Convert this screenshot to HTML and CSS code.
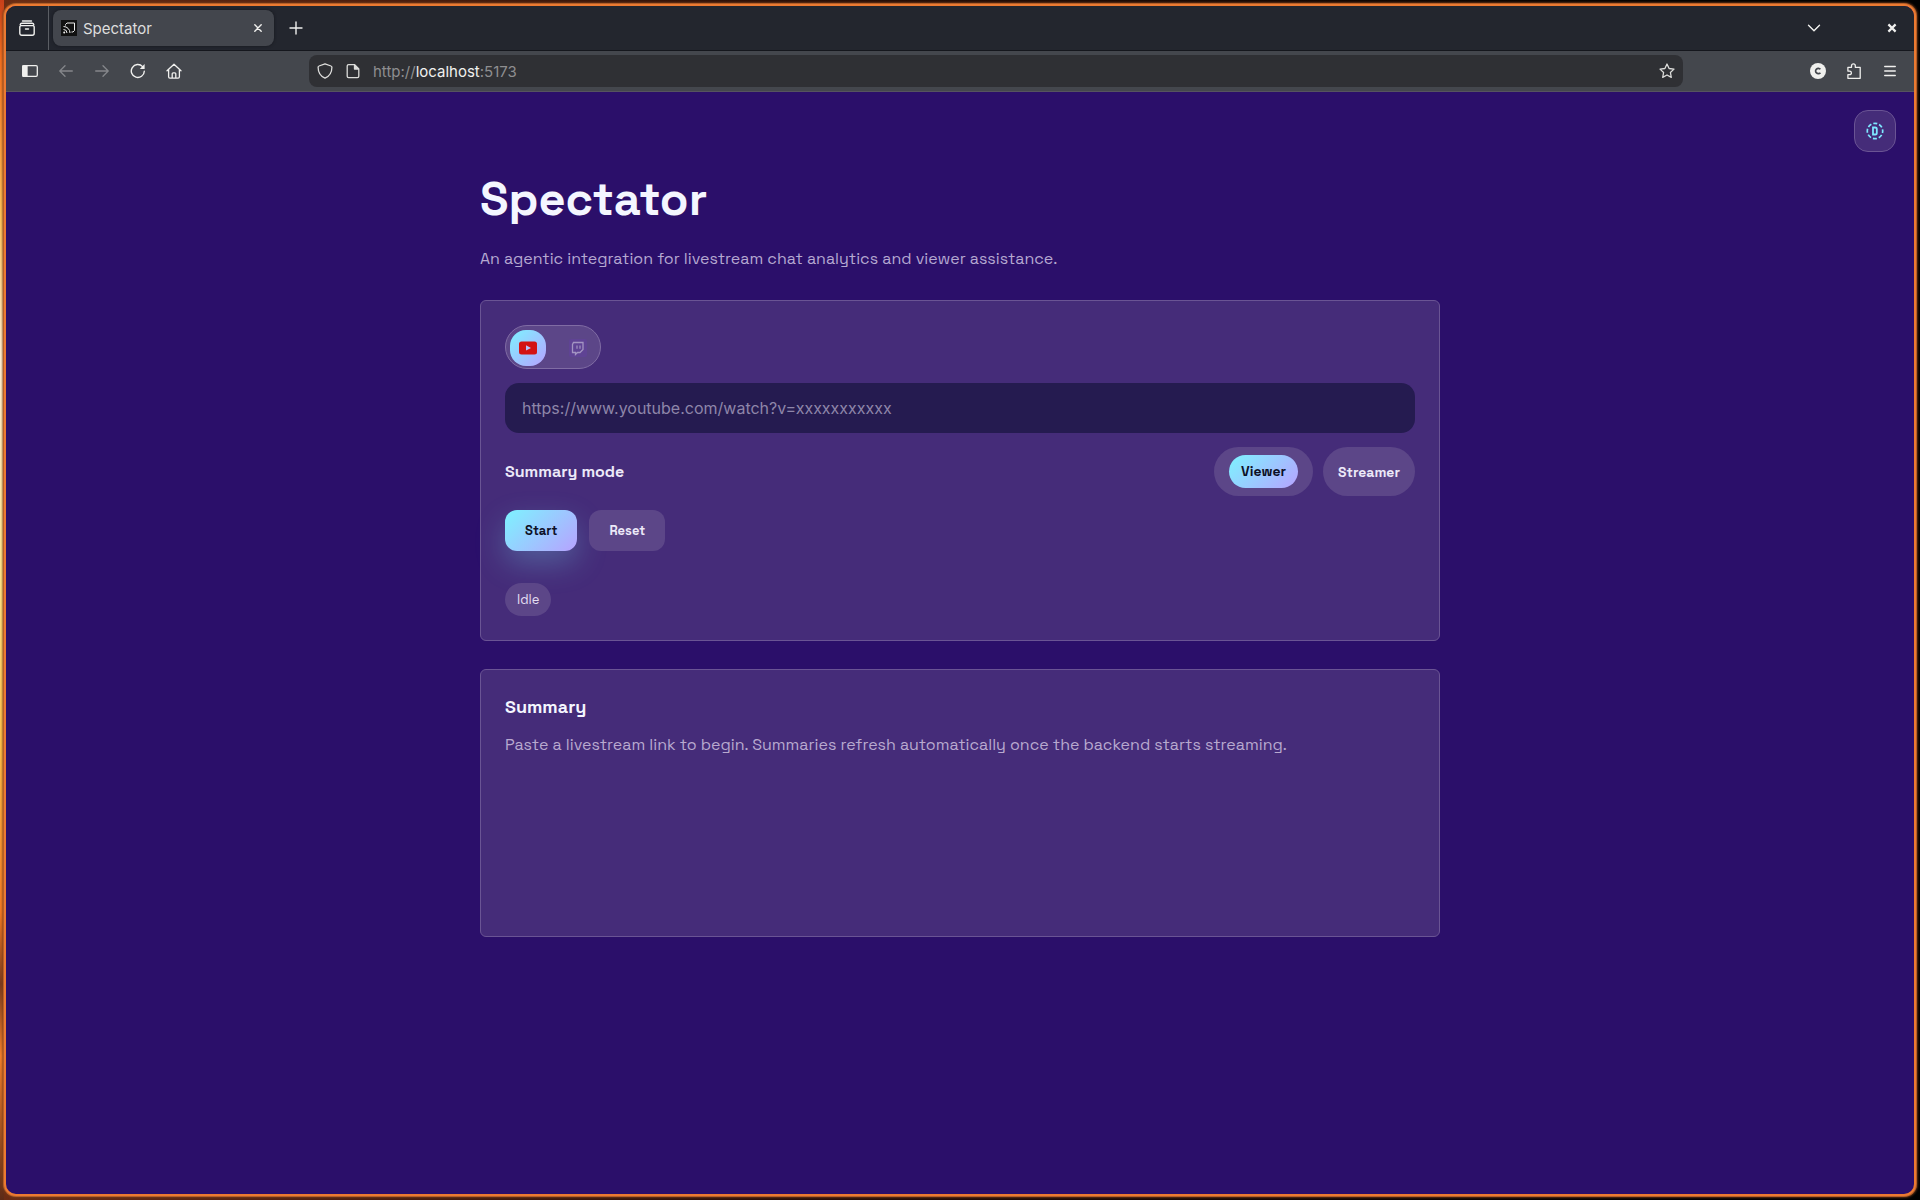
FILE: index.html
```html
<!DOCTYPE html>
<html lang="en">
<head>
  <meta charset="UTF-8">
  <meta name="viewport" content="width=device-width, initial-scale=1.0">
  <title>Spectator</title>
  <link rel="stylesheet" href="styles.css">
</head>
<body>
  <div class="window">
    <div class="tab-strip">
      <button class="icon-button recent" aria-label="Recent browsing">
        <svg width="16" height="16" viewBox="0 0 16 16" fill="none" stroke="currentColor" stroke-width="1.4" stroke-linecap="round" stroke-linejoin="round"><path d="M3.500 1h9M1.200 4.600c.2-.9.800-1.300 1.600-1.300h10.400c.8 0 1.400.4 1.600 1.300M2.200 5.600h11.600a1.400 1.400 0 0 1 1.400 1.400v6.300a1.900 1.900 0 0 1-1.900 1.900H2.700a1.900 1.900 0 0 1-1.900-1.900V7a1.400 1.400 0 0 1 1.400-1.400zM6.500 9h3"/></svg>
      </button>
      <div class="tab">
        <svg class="favicon" width="16" height="16" viewBox="0 0 16 16" fill="none"><rect width="16" height="16" fill="#111"/><path d="M4.500 5.500V4.500L6 3h7.500v7.500L12 12h-1.500" stroke="#eee"/><path d="M2.500 6.500a6.500 6.500 0 0 1 6.500 6.500M2.500 9.500A3.500 3.500 0 0 1 6 13" stroke="#eee"/><circle cx="3.200" cy="12.400" r="1" fill="#eee"/></svg>
        <span class="tab-title">Spectator</span>
        <button class="tab-close" aria-label="Close tab">
          <svg width="8" height="8" viewBox="0 0 8 8" stroke="currentColor" stroke-width="1.4" stroke-linecap="round"><path d="M.8.8l6.400 6.400M7.200.8L.8 7.200"/></svg>
        </button>
      </div>
      <button class="icon-button" aria-label="New tab">
        <svg width="14" height="14" viewBox="0 0 14 14" stroke="currentColor" stroke-width="1.400" stroke-linecap="round"><path d="M7 1v12M1 7h12"/></svg>
      </button>
      <div class="window-controls">
        <button class="icon-button" aria-label="List all tabs">
          <svg width="14" height="8" viewBox="0 0 14 8" fill="none" stroke="currentColor" stroke-width="1.400" stroke-linecap="round" stroke-linejoin="round"><path d="M1.500 1.200L7 6.700l5.500-5.500"/></svg>
        </button>
        <button class="icon-button window-close" aria-label="Close window">
          <svg width="10" height="10" viewBox="0 0 10 10" stroke="currentColor" stroke-width="2.200"><path d="M1.400 1.400l7.200 7.200M8.600 1.400L1.400 8.600"/></svg>
        </button>
      </div>
    </div>

    <div class="toolbar">
      <div class="toolbar-group">
        <button class="icon-button" aria-label="Sidebar">
          <svg width="16" height="12" viewBox="0 0 16 12" fill="none" stroke="currentColor" stroke-width="1.300"><rect x=".7" y=".7" width="14.600" height="10.600" rx="1.200"/><path d="M1 1h4v10H1z" fill="currentColor"/></svg>
        </button>
        <button class="icon-button" aria-label="Back" disabled>
          <svg width="14" height="12" viewBox="0 0 14 12" fill="none" stroke="currentColor" stroke-width="1.300" stroke-linecap="round" stroke-linejoin="round"><path d="M13.300 6H.9M6 .8L.8 6 6 11.200"/></svg>
        </button>
        <button class="icon-button" aria-label="Forward" disabled>
          <svg width="14" height="12" viewBox="0 0 14 12" fill="none" stroke="currentColor" stroke-width="1.300" stroke-linecap="round" stroke-linejoin="round"><path d="M.7 6h12.400M8 .8L13.200 6 8 11.200"/></svg>
        </button>
        <button class="icon-button" aria-label="Reload">
          <svg width="16" height="16" viewBox="0 0 16 16" fill="none" stroke="currentColor" stroke-width="1.400" stroke-linecap="round"><path d="M14.300 8.200A6.500 6.500 0 1 1 12.600 3.600"/><path d="M14.600 1v5H9.800z" fill="currentColor" stroke="none"/></svg>
        </button>
        <button class="icon-button" aria-label="Home">
          <svg width="16" height="16" viewBox="0 0 16 16" fill="none" stroke="currentColor" stroke-width="1.300" stroke-linecap="round" stroke-linejoin="round"><path d="M1 7.800l7-6.600 7 6.600M2.600 6.600v7.200c0 .8.500 1.300 1.300 1.300h8.200c.8 0 1.300-.5 1.300-1.300V6.600M6.200 15v-4.200c0-.6.400-1 1-1h1.600c.6 0 1 .4 1 1V15"/></svg>
        </button>
      </div>
      <div class="url-bar">
        <svg width="16" height="16" viewBox="0 0 16 16" fill="none" stroke="currentColor" stroke-width="1.300" stroke-linejoin="round"><path d="M8 .8L14 3c.6.200.9.600.9 1.200 0 5-2.200 8.800-6.900 11C3.300 13 1.100 9.200 1.100 4.200c0-.6.300-1 .9-1.200z"/></svg>
        <svg width="16" height="16" viewBox="0 0 16 16" fill="none" stroke="currentColor" stroke-width="1.300" stroke-linejoin="round"><path d="M3.600 1.700h6l4.200 4.200v7.300c0 .800-.6 1.400-1.400 1.400H3.600c-.8 0-1.400-.6-1.400-1.400V3.100c0-.8.600-1.400 1.400-1.400z"/><path d="M9.500 2v4h4z" fill="currentColor"/></svg>
        <span class="url">http://<b>localhost</b>:5173</span>
        <button class="icon-button star" aria-label="Bookmark this page">
          <svg width="16" height="16" viewBox="0 0 16 16" fill="none" stroke="currentColor" stroke-width="1.300" stroke-linejoin="round"><path d="M8 1l2.100 4.500 4.900.600-3.600 3.400.9 4.900L8 12l-4.300 2.400.9-4.900L1 6.100l4.900-.600z"/></svg>
        </button>
      </div>
      <div class="toolbar-group">
        <button class="icon-button" aria-label="Account">
          <svg width="16" height="16" viewBox="0 0 16 16"><circle cx="8" cy="8" r="8" fill="currentColor"/><path d="M10.400 6.300a2.700 2.700 0 1 0 0 3.400" fill="none" stroke="#44474d" stroke-width="1.700"/></svg>
        </button>
        <button class="icon-button" aria-label="Extensions">
          <svg width="16" height="16" viewBox="0 0 16 16" fill="none" stroke="currentColor" stroke-width="1.300" stroke-linejoin="round"><path d="M5.500 4.300V2.700a1.900 1.900 0 0 1 3.800 0v1.600h4.900v11H1.900v-3.600h1.700a1.800 1.800 0 0 0 0-3.600H1.900V4.300z"/></svg>
        </button>
        <button class="icon-button" aria-label="Menu">
          <svg width="12" height="12" viewBox="0 0 12 12" stroke="currentColor" stroke-width="1.300" stroke-linecap="round"><path d="M.7 1.500h10.600M.7 6h10.600M.7 10.500h10.600"/></svg>
        </button>
      </div>
    </div>

    <div class="page">
      <button class="dev-button" aria-label="Developer mode">
        <svg width="18" height="18" viewBox="0 0 18 18" fill="none" stroke="currentColor"><circle cx="9" cy="9" r="7.700" stroke-width="1.700" stroke-dasharray="4.050 2" stroke-dashoffset="2"/><path d="M7 5.500h2.200c1 0 1.600.6 1.600 1.600v3.800c0 1-.6 1.600-1.600 1.600H7z" stroke-width="1.800"/></svg>
      </button>
      <main class="container">
        <header>
          <h1>Spectator</h1>
          <p class="tagline">An agentic integration for livestream chat analytics and viewer assistance.</p>
        </header>

        <section class="card controls">
          <div class="platform-toggle">
            <button class="platform active" aria-label="YouTube">
              <svg width="18" height="14" viewBox="0 0 18 14"><rect y=".5" width="18" height="13" rx="2.500" fill="#d31313"/><path d="M7 4.200v5.300L12 7z" fill="#b4c4ff"/></svg>
            </button>
            <button class="platform" aria-label="Twitch">
              <svg width="18" height="18" viewBox="0 0 18 18"><rect width="18" height="18" rx="2" fill="#5f4394"/><path d="M4.500 3.500h9.500v7l-3 3H8.500l-2 2v-2h-3V5.500z" fill="none" stroke="#a394c2" stroke-width="1.300"/><path d="M8 6.500v3.200M11 6.500v3.200" stroke="#a394c2" stroke-width="1.200"/></svg>
            </button>
          </div>
          <input class="link-input" type="text" aria-label="Livestream link" placeholder="https://www.youtube.com/watch?v=xxxxxxxxxxx">
          <div class="mode-row">
            <span class="mode-label">Summary mode</span>
            <div class="mode-options">
              <button class="mode"><span class="mode-active">Viewer</span></button>
              <button class="mode">Streamer</button>
            </div>
          </div>
          <div class="actions">
            <button class="button start-button">Start</button>
            <button class="button reset-button">Reset</button>
          </div>
          <span class="status">Idle</span>
        </section>

        <section class="card summary">
          <h2>Summary</h2>
          <p>Paste a livestream link to begin. Summaries refresh automatically once the backend starts streaming.</p>
        </section>
      </main>
    </div>
  </div>
</body>
</html>
```

FILE: styles.css
```css
* {
  box-sizing: border-box;
}
body {
  margin: 0;
  padding: 4px;
  min-height: 100vh;
  display: flex;
  font-family: "Space Grotesk", Inter, sans-serif;
  background: linear-gradient(90deg, transparent 4px, #6b2c14 4px, #2a0f08 40%, #000 90%),
    linear-gradient(#c8401a, #f5701f 5%, #ffc65a 18%, #fff3d8 30%, #ffe88a 48%, #ffc24a 62%, #f57a22 76%, #7a3a1c 82%, #f5802a 88%, #5c2a17);
}
button {
  font-family: inherit;
  border: none;
  padding: 0;
  color: inherit;
  background: none;
  cursor: pointer;
}
h1, h2, p {
  margin: 0;
}
svg {
  display: block;
  flex: none;
}

/* browser window */
.window {
  flex: 1;
  display: flex;
  flex-direction: column;
  border: 2px solid #ec7a31;
  border-radius: 12px;
  overflow: hidden;
  box-shadow: 0 0 0 1px #b55f28, 0 0 2px 2px rgba(120, 60, 25, 0.7);
  background: #2b0f6a;
}
.tab-strip, .toolbar {
  display: flex;
  align-items: center;
  color: #f0f0ee;
  font-family: Inter, sans-serif;
}
.tab-strip {
  height: 45px;
  background: #23262e;
  border-bottom: 1px solid #15171d;
}
.icon-button {
  width: 36px;
  height: 32px;
  display: flex;
  align-items: center;
  justify-content: center;
}
.icon-button:disabled {
  color: #85878b;
}
.recent {
  width: 43px;
  height: 44px;
  border-right: 1px solid #5b5e64;
}
.tab {
  width: 221px;
  height: 36px;
  margin: 0 4px;
  padding: 0 8px;
  display: flex;
  align-items: center;
  gap: 6px;
  border-radius: 8px;
  background: #43464d;
  box-shadow: 0 0 3px #15171d;
}
.tab-title {
  flex: 1;
  font-size: 15px;
  color: #dededd;
}
.tab-close {
  padding: 4px;
}
.window-controls {
  margin-left: auto;
  padding-right: 4px;
  display: flex;
  gap: 42px;
}
.toolbar {
  height: 41px;
  padding: 0 6px;
  gap: 117px;
  background: #44474d;
  border-bottom: 1px solid #56545f;
}
.toolbar-group {
  display: flex;
}
.url-bar {
  flex: 1;
  height: 32px;
  padding: 0 0 0 8px;
  display: flex;
  align-items: center;
  gap: 12px;
  border-radius: 8px;
  background: #2f3034;
  color: #dcdcda;
}
.url {
  flex: 1;
  font-size: 15px;
  color: #8e8e90;
}
.url b {
  font-weight: 400;
  color: #f0f0ee;
}
.star {
  width: 32px;
}

/* page */
.page {
  flex: 1;
  position: relative;
  color: #f4f6ff;
}
.dev-button {
  position: absolute;
  top: 18px;
  right: 18px;
  width: 42px;
  height: 42px;
  display: flex;
  align-items: center;
  justify-content: center;
  border: 1px solid #6a5494;
  border-radius: 14px;
  background: #452c79;
  color: #7de8ff;
}
.container {
  max-width: 960px;
  margin: 0 auto;
  padding-top: 72px;
  display: flex;
  flex-direction: column;
  gap: 28px;
}
h1 {
  font-size: 47px;
  line-height: 70px;
  font-weight: 700;
}
.tagline {
  margin-top: 12px;
  font-size: 16px;
  line-height: 26px;
  color: #b5a8d1;
}
.card {
  padding: 24px;
  border: 1px solid #6a5494;
  border-radius: 6px;
  background: #452c79;
}
.controls {
  display: flex;
  flex-direction: column;
  align-items: flex-start;
  gap: 14px;
}
.platform-toggle {
  display: flex;
  gap: 14px;
  padding: 4px 4px 2px;
  border: 1px solid #806ca4;
  border-radius: 22px;
  background: #5c4688;
}
.platform {
  width: 36px;
  height: 36px;
  display: flex;
  align-items: center;
  justify-content: center;
}
.platform.active {
  border-radius: 16px;
  background: linear-gradient(135deg, #7df3ff, #b7a2ff);
}
.link-input {
  width: 100%;
  height: 50px;
  padding: 0 17px;
  border: none;
  border-radius: 14px;
  background: #251b50;
  color: #f4f6ff;
  font-family: Inter, sans-serif;
  font-size: 16px;
}
.link-input::placeholder {
  color: #8e86a9;
}
.mode-row {
  width: 100%;
  display: flex;
  align-items: center;
  justify-content: space-between;
}
.mode-label {
  font-size: 16px;
  font-weight: 600;
  color: #ece9f8;
}
.mode-options {
  display: flex;
  gap: 10px;
}
.mode {
  height: 49px;
  padding: 0 15px;
  border-radius: 25px;
  background: #5c4688;
  color: #ece9f8;
  font-size: 14px;
  font-weight: 600;
}
.mode-active {
  display: block;
  padding: 0 12px;
  line-height: 33px;
  border-radius: 17px;
  background: linear-gradient(135deg, #7df3ff, #b7a2ff);
  color: #0d1026;
}
.actions {
  display: flex;
  gap: 12px;
}
.button {
  height: 41px;
  padding: 0 20px;
  border-radius: 12px;
  font-size: 13px;
  font-weight: 600;
}
.start-button {
  background: linear-gradient(135deg, #7df3ff, #b7a2ff);
  color: #0d1026;
  box-shadow: 0 12px 30px rgba(125, 243, 255, 0.25);
}
.reset-button {
  background: #5c4688;
  color: #ece9f8;
}
.status {
  margin-top: 18px;
  padding: 0 12px;
  line-height: 33px;
  border-radius: 17px;
  background: #5c4688;
  color: #e4dff2;
  font-size: 13px;
}
.summary {
  min-height: 268px;
}
.summary h2 {
  font-size: 18px;
  line-height: 26px;
  font-weight: 700;
}
.summary p {
  margin-top: 12px;
  font-size: 16px;
  line-height: 26px;
  color: #b8a9cf;
}
```
